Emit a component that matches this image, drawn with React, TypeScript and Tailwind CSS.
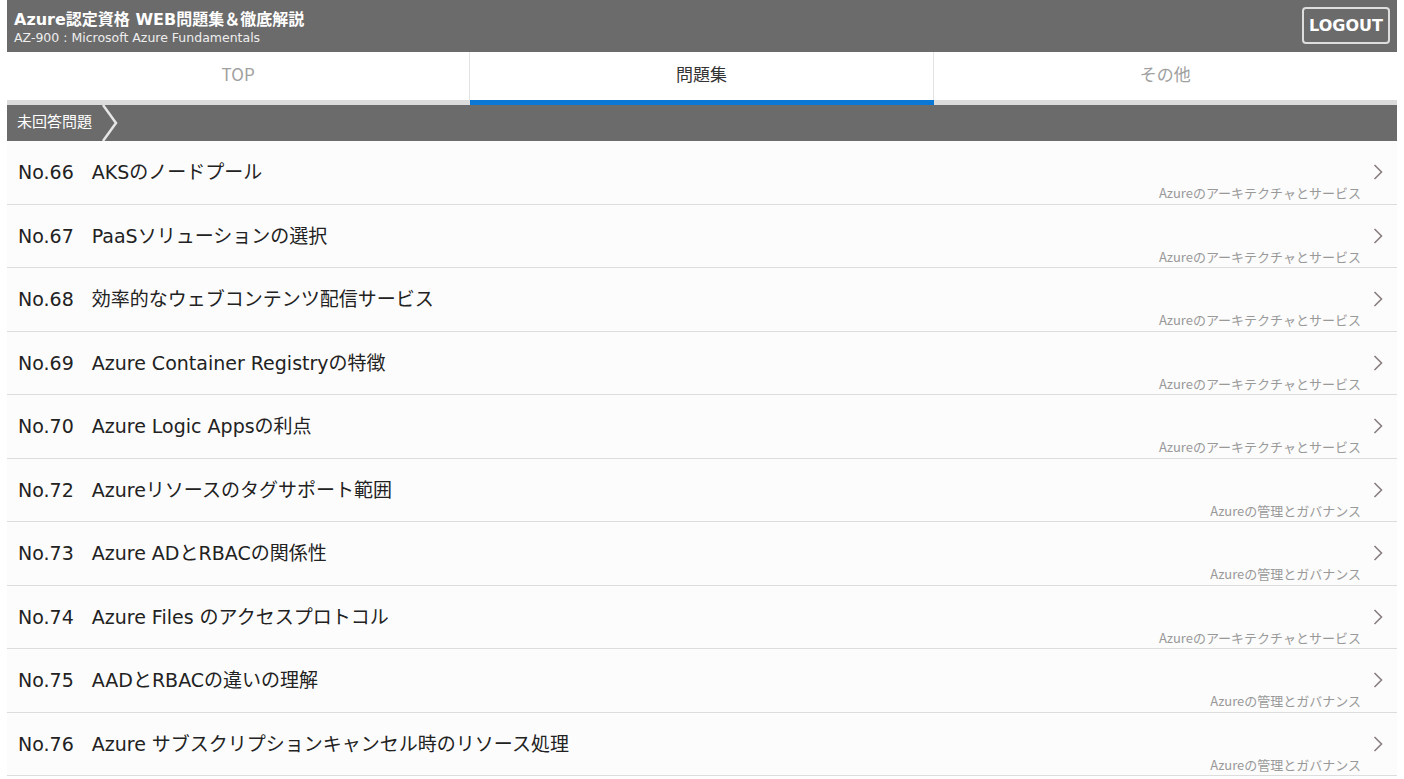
import React from "react";

const rows = [
  { no: "No.66", title: "AKSのノードプール", cat: "Azureのアーキテクチャとサービス" },
  { no: "No.67", title: "PaaSソリューションの選択", cat: "Azureのアーキテクチャとサービス" },
  { no: "No.68", title: "効率的なウェブコンテンツ配信サービス", cat: "Azureのアーキテクチャとサービス" },
  { no: "No.69", title: "Azure Container Registryの特徴", cat: "Azureのアーキテクチャとサービス" },
  { no: "No.70", title: "Azure Logic Appsの利点", cat: "Azureのアーキテクチャとサービス" },
  { no: "No.72", title: "Azureリソースのタグサポート範囲", cat: "Azureの管理とガバナンス" },
  { no: "No.73", title: "Azure ADとRBACの関係性", cat: "Azureの管理とガバナンス" },
  { no: "No.74", title: "Azure Files のアクセスプロトコル", cat: "Azureのアーキテクチャとサービス" },
  { no: "No.75", title: "AADとRBACの違いの理解", cat: "Azureの管理とガバナンス" },
  { no: "No.76", title: "Azure サブスクリプションキャンセル時のリソース処理", cat: "Azureの管理とガバナンス" },
];

const noto = { fontFamily: '"Noto Sans CJK JP", "Noto Sans", sans-serif' };
const deja = { fontFamily: '"DejaVu Sans", "Noto Sans CJK JP", sans-serif' };

export default function App() {
  return (
    <div className="w-[1404px] h-[779px] overflow-hidden bg-white px-[7px]" style={noto}>
      <div className="h-[52px] bg-[#6b6b6b] flex items-center justify-between pl-[7px] pr-[7px]">
        <div className="flex flex-col text-white pt-[2px]" style={deja}>
          <div className="text-[16px] font-bold leading-[20px]">Azure認定資格 WEB問題集＆徹底解説</div>
          <div className="text-[12.5px] leading-[15px] text-[#eeeeee]">AZ-900 : Microsoft Azure Fundamentals</div>
        </div>
        <div
          className="w-[88px] h-[37px] border-2 border-[#dddddd] rounded-[4px] flex items-center justify-center text-white font-bold text-[16px] mb-[1px]"
          style={deja}
        >
          LOGOUT
        </div>
      </div>
      <div className="flex h-[53px]">
        <div className="flex-1 flex flex-col">
          <div className="flex-1 flex items-center justify-center pb-[4px] text-[17px] text-[#a0a0a0] border-r border-[#e3e3e3]">TOP</div>
          <div className="h-[5px] bg-[#dcdcdc]" />
        </div>
        <div className="flex-1 flex flex-col">
          <div className="flex-1 flex items-center justify-center pb-[4px] text-[17px] text-[#333333] border-r border-[#e3e3e3]">問題集</div>
          <div className="h-[5px] bg-[#0a78d4]" />
        </div>
        <div className="flex-1 flex flex-col">
          <div className="flex-1 flex items-center justify-center pb-[4px] text-[17px] text-[#a0a0a0]">その他</div>
          <div className="h-[5px] bg-[#dcdcdc]" />
        </div>
      </div>
      <div className="h-[36px] bg-[#6b6b6b] flex items-center">
        <span className="text-white text-[15px] pl-[10px] pb-[3px]">未回答問題</span>
        <svg width="18" height="36" viewBox="0 0 18 36" className="ml-[9px]">
          <polyline points="2,0 15,18 2,36" fill="none" stroke="#e6e6e6" strokeWidth="2.5" />
        </svg>
      </div>
      <div>
        {rows.map((r) => (
          <div key={r.no} className="h-[63.5px] bg-[#fcfcfc] border-b border-[#dddddd] flex flex-col">
            <div className="flex items-center justify-between pt-[19px] pl-[11px] pr-[14px]">
              <div className="text-[19px] leading-[24px] text-[#222222] whitespace-nowrap" style={deja}>
                <span>{r.no}</span>
                <span className="ml-[18px]">{r.title}</span>
              </div>
              <svg width="10" height="16" viewBox="0 0 10 16">
                <polyline points="1.5,1 8.5,8 1.5,15" fill="none" stroke="#8a7e7e" strokeWidth="1.6" />
              </svg>
            </div>
            <div className="text-right text-[13px] leading-[16px] text-[#999999] pr-[36px] mt-[1px]">{r.cat}</div>
          </div>
        ))}
      </div>
    </div>
  );
}
